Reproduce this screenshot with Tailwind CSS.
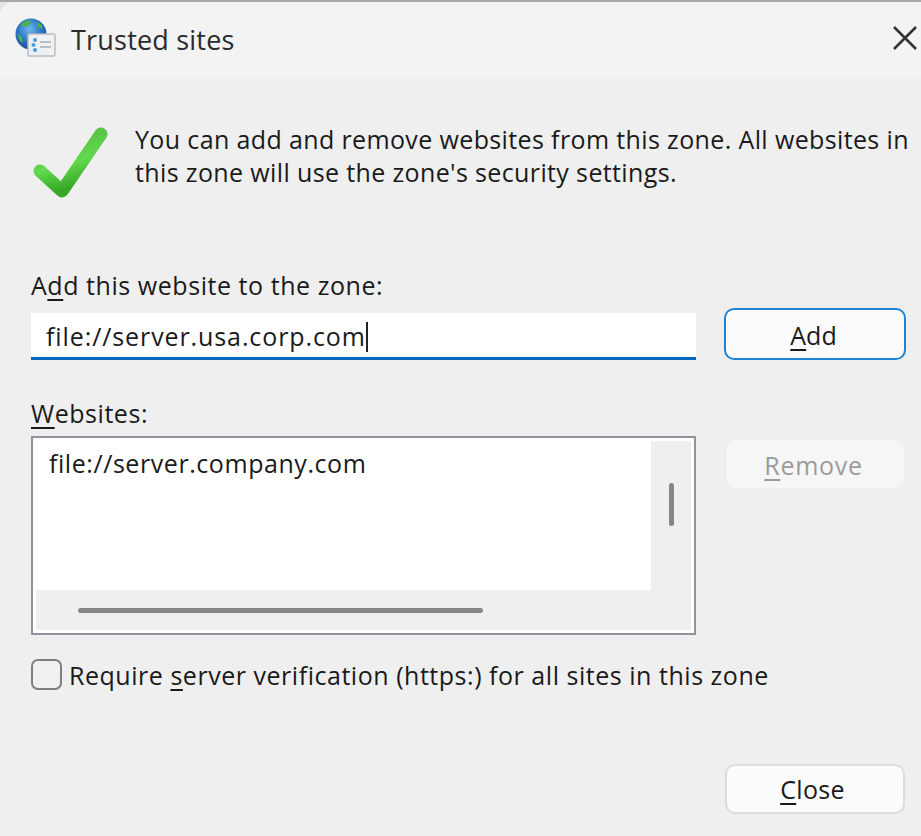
<!DOCTYPE html>
<html lang="en">
<head>
    <meta charset="UTF-8">
    <title>Trusted sites</title>
    <script src="https://cdn.jsdelivr.net/npm/@tailwindcss/browser@4"></script>
</head>
<body class="bg-[#efefef] font-['Open_Sans',sans-serif] text-[25px] text-[#1a1a1a] overflow-hidden">
    <div class="w-[921px] h-[836px] flex flex-col bg-[#e6e6e6]">
        <div class="h-[2px] bg-[#a8a8a8]"></div>
        <div class="flex-1 flex flex-col bg-[#efefef] rounded-tl-[14px]">
            <!-- title bar -->
            <div class="h-[76px] bg-[#f3f3f3] rounded-tl-[14px] flex items-center pl-[15px] pr-[3px]">
                <svg class="w-[42px] h-[42px] mt-[-5px] blur-[0.6px]" viewBox="0 0 42 42">
                    <defs>
                        <radialGradient id="globe" cx="45%" cy="35%" r="65%">
                            <stop offset="0" stop-color="#6fb8ee"/>
                            <stop offset="0.6" stop-color="#2a73c4"/>
                            <stop offset="1" stop-color="#1c4f93"/>
                        </radialGradient>
                    </defs>
                    <circle cx="16" cy="17" r="15.5" fill="url(#globe)"/>
                    <path d="M7 6c3-2 7-3 9-2l-2 4-5 2-3-1zM2 17l5 3 1 6-3-2zM21 5l5 2 2 5-5-2z" fill="#4fb04a"/>
                    <rect x="13" y="17" width="27" height="22" rx="1.5" fill="#eef1f4" stroke="#b9bcc0" stroke-width="1.5"/>
                    <circle cx="20" cy="23" r="2" fill="#4c9bdd"/>
                    <circle cx="18.5" cy="28" r="2" fill="#4c9bdd"/>
                    <circle cx="20" cy="33" r="2" fill="#4c9bdd"/>
                    <path d="M25 25h11M25 30h11" stroke="#a9adb2" stroke-width="1.5"/>
                </svg>
                <span class="ml-[14px] mt-[-2px] text-[#2b2b2b] text-[27px] leading-none tracking-[0.2px]">Trusted sites</span>
                <svg class="ml-auto w-[26px] h-[26px] mt-[-4px] blur-[0.4px]" viewBox="0 0 26 26" fill="none" stroke="#333" stroke-width="2.5">
                    <path d="M2 2l22 22M24 2L2 24"/>
                </svg>
            </div>
            <!-- body -->
            <div class="flex flex-col pl-[31px] pr-[15px]">
                <div class="flex h-[127px] pt-[44px]">
                    <svg class="w-[78px] h-[78px] mt-[2px] shrink-0 blur-[0.6px]" viewBox="0 0 78 78">
                        <defs>
                            <linearGradient id="tick" x1="0" y1="0" x2="0.3" y2="1">
                                <stop offset="0" stop-color="#52b840"/>
                                <stop offset="0.6" stop-color="#62d94e"/>
                                <stop offset="1" stop-color="#35a824"/>
                            </linearGradient>
                        </defs>
                        <path d="M9 47L31 67L70 10" fill="none" stroke="url(#tick)" stroke-width="13" stroke-linecap="round" stroke-linejoin="round"/>
                    </svg>
                    <p class="ml-[26px] leading-[33px] mt-[1px] whitespace-nowrap tracking-[0.37px]">You can add and remove websites from this zone. All websites in<br>this zone will use the zone's security settings.</p>
                </div>
                <label class="mt-[65px] leading-[30px] whitespace-nowrap tracking-[0.55px]">A<u class="underline-offset-4">d</u>d this website to the zone:</label>
                <div class="flex mt-[8px] h-[52px]">
                    <div class="w-[665px] h-[47px] mt-[5px] bg-white border-b-[3px] border-[#0067c0] pl-[15px] pt-[3px] flex items-center whitespace-nowrap tracking-[0.9px]">file://server.usa.corp.com<span class="w-[2px] h-[30px] bg-[#222]"></span></div>
                    <button class="ml-[28px] w-[182px] h-[52px] bg-[#fbfbfb] border-2 border-[#1f83d6] rounded-[10px] pt-[3px] pr-[3px]"><u class="underline-offset-4">A</u>dd</button>
                </div>
                <label class="mt-[38px] leading-[30px] tracking-[0.55px]"><u class="underline-offset-4">W</u>ebsites:</label>
                <div class="flex mt-[8px] items-start">
                    <div class="w-[665px] h-[199px] border-2 border-[#8e939c] bg-white p-[3px] flex flex-col">
                        <div class="flex flex-1">
                            <div class="flex-1 pl-[13px] pt-[4px] leading-[36px] tracking-[0.56px]">file://server.company.com</div>
                            <div class="w-[40px] bg-[#efefef] flex justify-center items-start pt-[42px]">
                                <div class="w-[5px] h-[43px] bg-[#868686] rounded-full"></div>
                            </div>
                        </div>
                        <div class="h-[40px] bg-[#efefef] flex items-center pl-[42px]">
                            <div class="w-[405px] h-[5px] bg-[#868686] rounded-full"></div>
                        </div>
                    </div>
                    <button class="ml-[29px] mt-[3px] w-[180px] h-[50px] bg-[#f6f6f6] border border-[#ececec] rounded-[10px] text-[#9b9b9b] pt-[3px] pr-[3px] tracking-[0.7px]"><u class="underline-offset-4">R</u>emove</button>
                </div>
                <div class="flex items-center mt-[20px]">
                    <div class="w-[31px] h-[31px] border-2 border-[#7f7f7f] rounded-[7px] bg-[#f0f0f0]"></div>
                    <span class="ml-[7px] whitespace-nowrap tracking-[0.53px] pt-[2px]">Require <u class="underline-offset-4">s</u>erver verification (https:) for all sites in this zone</span>
                </div>
                <div class="flex justify-end mt-[69px] pr-[1px]">
                    <button class="w-[180px] h-[50px] bg-[#fbfbfb] border-2 border-[#dcdcdc] rounded-[10px] pt-[3px] pr-[5px] tracking-[0.3px]"><u class="underline-offset-4">C</u>lose</button>
                </div>
            </div>
        </div>
    </div>
</body>
</html>
